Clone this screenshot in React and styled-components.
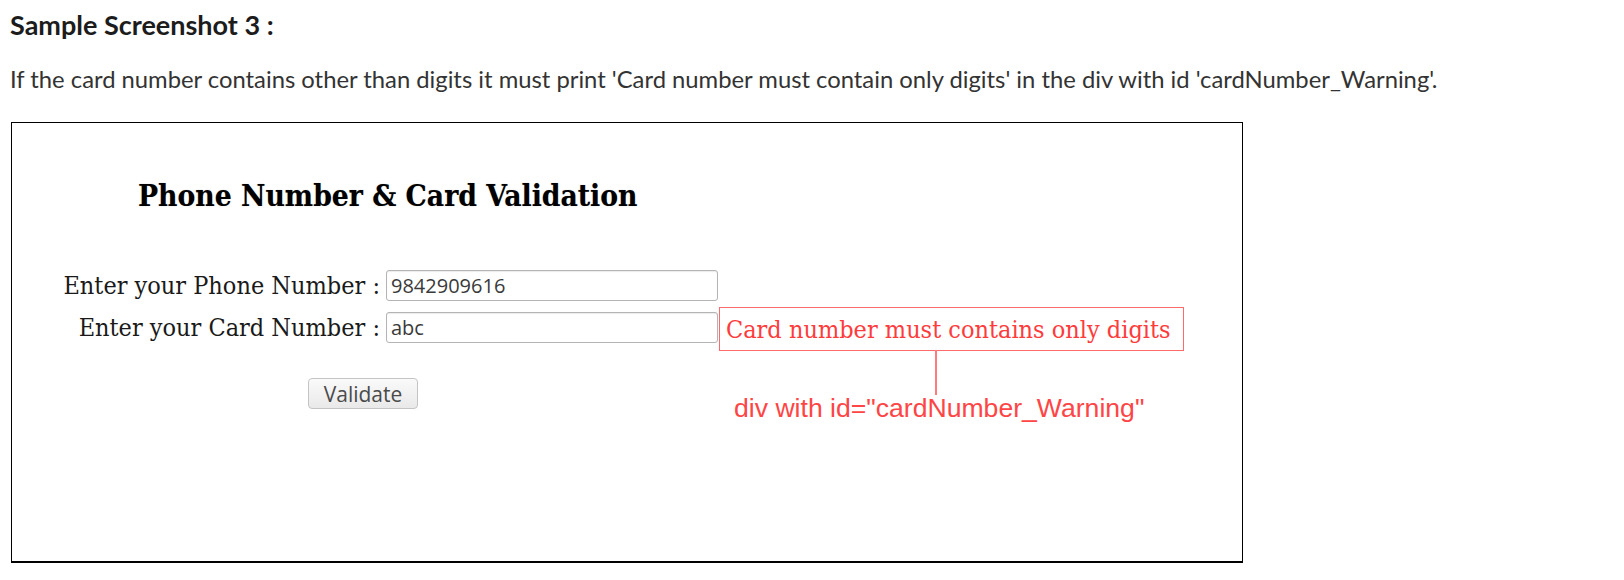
import styled, { createGlobalStyle } from 'styled-components'

const GlobalStyle = createGlobalStyle`
    html, body {
        margin: 0;
        background: #fff;
    }
`

export default function App() {
    return (
        <Page>
            <GlobalStyle />
            <Heading>Sample Screenshot 3 :</Heading>
            <Description>
                If the card number contains other than digits it must print 'Card number must contain only digits' in the div with id 'cardNumber_Warning'.
            </Description>
            <Frame>
                <Title>Phone Number &amp; Card Validation</Title>
                <Form>
                    <Label>Enter your Phone Number :</Label>
                    <Input defaultValue="9842909616" />
                    <span />
                    <Label>Enter your Card Number :</Label>
                    <Input defaultValue="abc" />
                    <Warning id="cardNumber_Warning">
                        Card number must contains only digits
                        <Callout>
                            <CalloutLine />
                            <CalloutText>div with id="cardNumber_Warning"</CalloutText>
                        </Callout>
                    </Warning>
                </Form>
                <Button>Validate</Button>
            </Frame>
        </Page>
    )
}

const Page = styled.div`
    padding: 8px 0 0 10px;
    font-family: Lato, "Open Sans", sans-serif;
`
const Heading = styled.h2`
    margin: 0;
    font-family: Lato, sans-serif;
    font-weight: 700;
    font-size: 27px;
    color: #1c1c1c;
`
const Description = styled.p`
    margin: 24px 0 0;
    font-family: Lato, sans-serif;
    font-size: 23.8px;
    color: #333;
`
const Frame = styled.div`
    box-sizing: border-box;
    width: 1232px;
    height: 441px;
    margin: 29px 0 0 1px;
    border: 1px solid #000;
    border-bottom-width: 2px;
    padding: 55px 0 0 50px;
    font-family: "DejaVu Serif Condensed", "DejaVu Serif", serif;
    font-stretch: condensed;
    color: #111;
`
const Title = styled.h1`
    margin: 0 0 57px 76px;
    font-size: 29.7px;
    font-weight: 700;
    color: #000;
    text-shadow: 0 0 1px rgba(0, 0, 0, 0.35);
`
const Form = styled.div`
    display: grid;
    grid-template-columns: 324px 332px auto;
    row-gap: 11px;
    align-items: start;
    justify-items: start;
`
const Label = styled.label`
    justify-self: end;
    padding-right: 6px;
    font-size: 25px;
    line-height: 31px;
    color: #1a1a1a;
    white-space: nowrap;
`
const Input = styled.input`
    box-sizing: border-box;
    width: 332px;
    height: 31px;
    padding: 0 4px;
    border: 1px solid #b4b4b4;
    border-radius: 3px;
    box-shadow: inset 0 1px 1px rgba(0, 0, 0, 0.08);
    font-family: "Open Sans", sans-serif;
    font-size: 20px;
    color: #3a3a3a;
    outline: none;
`
const Warning = styled.div`
    position: relative;
    box-sizing: border-box;
    height: 44px;
    margin: -5px 0 0 1px;
    padding: 0 12px 0 6px;
    display: flex;
    align-items: center;
    border: 1.5px solid #ff6a6a;
    font-size: 25px;
    color: #ff3b3b;
    white-space: nowrap;
`
const Callout = styled.div`
    position: absolute;
    top: 100%;
    left: 14px;
`
const CalloutLine = styled.div`
    width: 2px;
    height: 45px;
    margin-left: 201px;
    background: #ff7a7a;
`
const CalloutText = styled.div`
    margin-top: -2px;
    font-family: "Liberation Sans", Arial, sans-serif;
    font-stretch: normal;
    font-size: 26.6px;
    color: #ff4545;
    white-space: nowrap;
`
const Button = styled.button`
    width: 110px;
    height: 31px;
    margin: 27px 0 0 246px;
    border: 1px solid #c4c4c4;
    border-radius: 4px;
    background: linear-gradient(#fafafa, #e9e9e9);
    font-family: "Open Sans", sans-serif;
    font-size: 21px;
    color: #4a4a4a;
`
